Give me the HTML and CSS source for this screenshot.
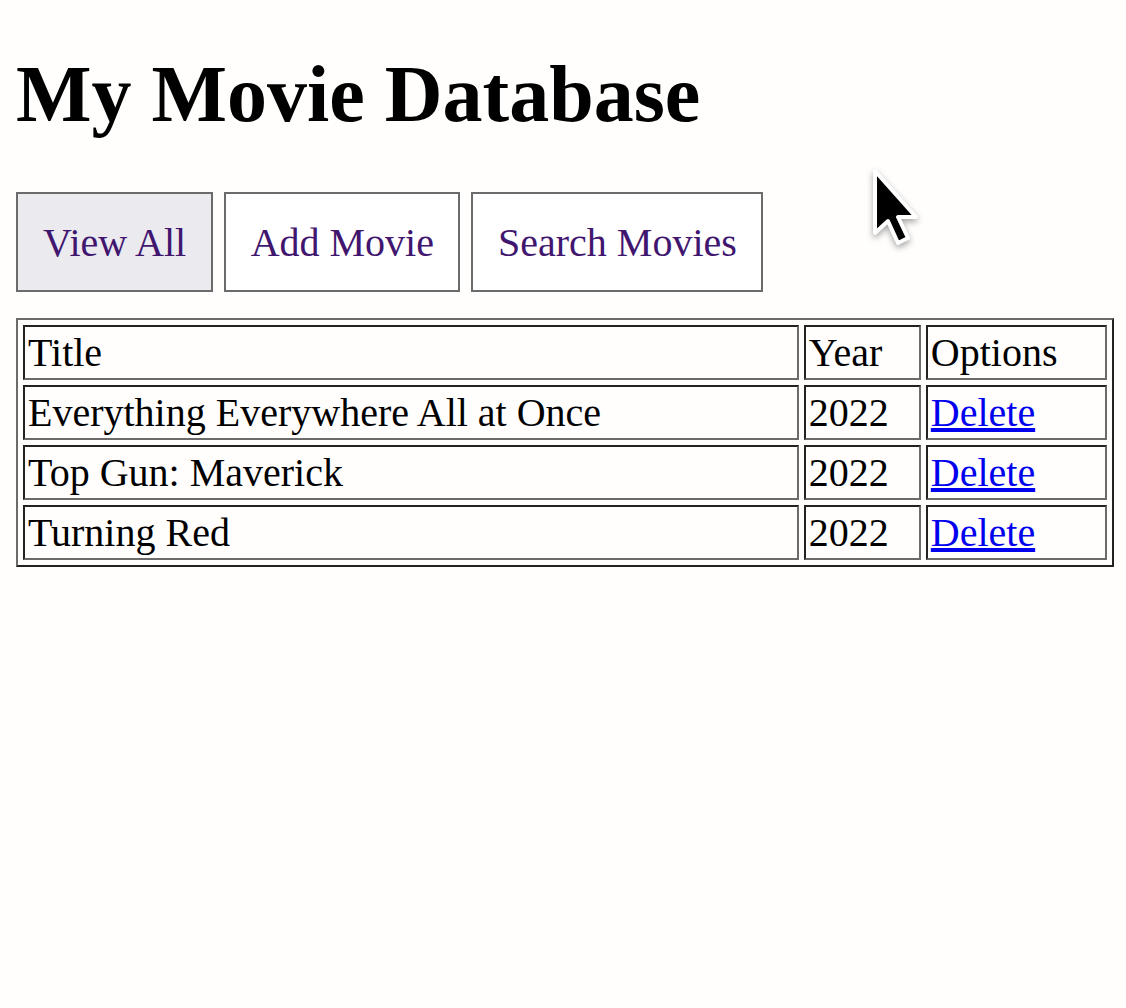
FILE: index.html
```html
<!DOCTYPE html>
<html lang="en">
<head>
    <meta charset="UTF-8">
    <meta name="viewport" content="width=device-width, initial-scale=1.0">
    <title>My Movie Database</title>
    <link rel="stylesheet" href="styles.css">
</head>
<body>
    <h1>My Movie Database</h1>
    <nav class="tabs">
        <button class="tab active">View All</button>
        <button class="tab">Add Movie</button>
        <button class="tab">Search Movies</button>
    </nav>

    <table class="movies">
        <colgroup>
            <col class="col-title">
            <col class="col-year">
            <col class="col-options">
        </colgroup>
        <tr>
            <td>Title</td>
            <td>Year</td>
            <td>Options</td>
        </tr>
        <tr>
            <td>Everything Everywhere All at Once</td>
            <td>2022</td>
            <td><a href="#">Delete</a></td>
        </tr>
        <tr>
            <td>Top Gun: Maverick</td>
            <td>2022</td>
            <td><a href="#">Delete</a></td>
        </tr>
        <tr>
            <td>Turning Red</td>
            <td>2022</td>
            <td><a href="#">Delete</a></td>
        </tr>
    </table>

    <svg class="cursor" width="52" height="84" viewBox="0 0 52 84">
        <path d="M5 5 L5 67 L18 55 L28 77 L38 72 L28 51 L46 51 Z" fill="#000" stroke="#fff" stroke-width="4" stroke-linejoin="round"/>
    </svg>
</body>
</html>
```

FILE: styles.css
```css
body {
    font-family: 'Liberation Serif', 'Times New Roman', serif;
    font-size: 40px;
    margin: 0;
    padding: 16px;
    background-color: #fffefd;
    color: #000;
}
h1 {
    font-size: 80px;
    margin: 32px 0 52px;
    line-height: 92px;
}
.tabs {
    display: flex;
    gap: 11px;
    margin-bottom: 26px;
}
.tab {
    font-family: inherit;
    font-size: 40px;
    height: 100px;
    padding: 0 24.5px;
    background-color: #fff;
    color: #41166f;
    border: 2px solid #6b6b6b;
    border-radius: 0;
}
.tab.active {
    padding: 0 25px;
    background-color: #ebeaef;
}
.movies {
    width: 1098px;
    table-layout: fixed;
    border-spacing: 5px;
    border: 2px solid;
    border-color: #6b6b6b #222 #222 #6b6b6b;
}
.movies td {
    padding: 3px;
    line-height: 45px;
    border: 2px solid;
    border-color: #222 #6b6b6b #6b6b6b #222;
}
.col-title {
    width: 775px;
}
.col-year {
    width: 117px;
}
.col-options {
    width: 181px;
}
.movies a {
    color: #0000ee;
}
.cursor {
    position: absolute;
    left: 870px;
    top: 166px;
    filter: drop-shadow(0 3px 3px rgba(0,0,0,0.35));
}
```
